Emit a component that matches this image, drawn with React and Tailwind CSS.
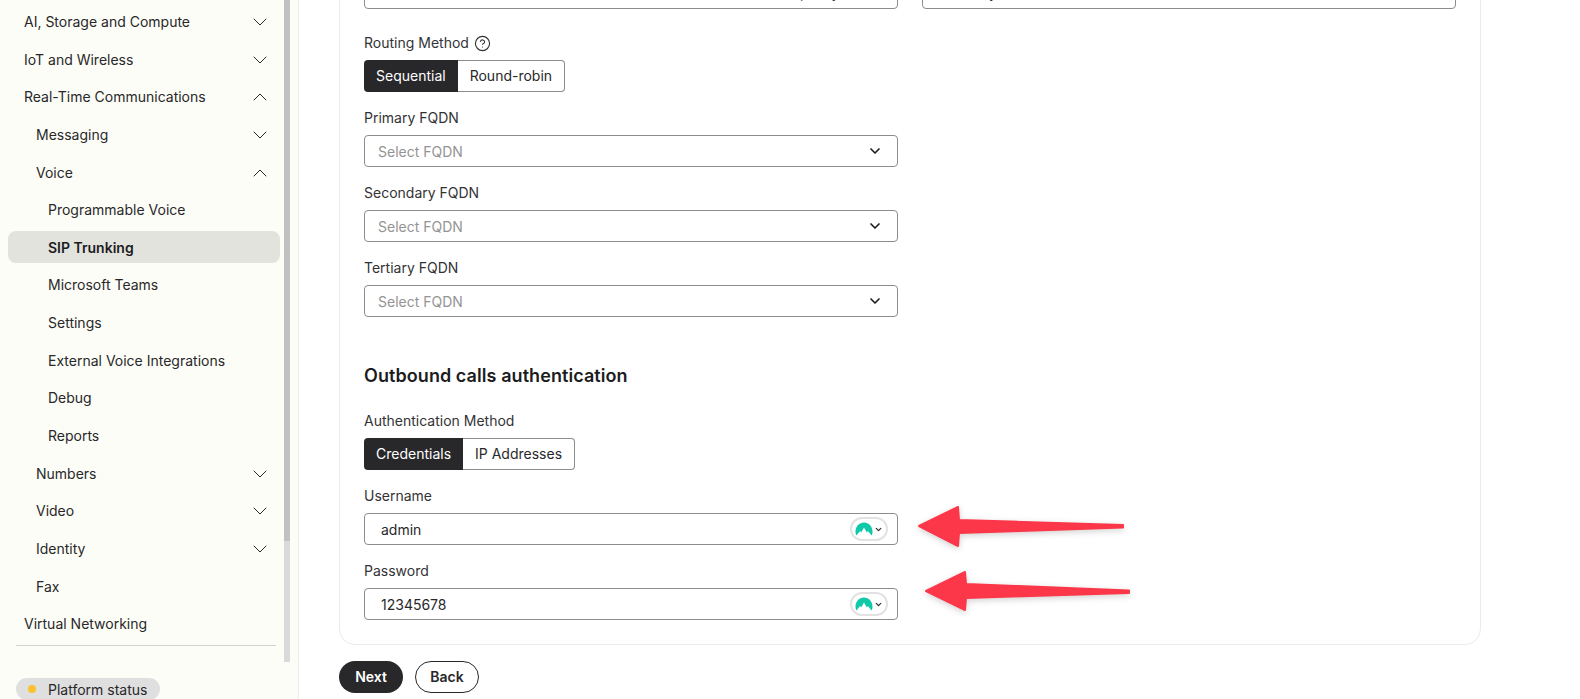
import React from "react";
import { ChevronDown, ChevronUp, CircleHelp } from "lucide-react";

const navItems = [
  { label: "AI, Storage and Compute", level: 0, icon: "down" },
  { label: "IoT and Wireless", level: 0, icon: "down" },
  { label: "Real-Time Communications", level: 0, icon: "up" },
  { label: "Messaging", level: 1, icon: "down" },
  { label: "Voice", level: 1, icon: "up" },
  { label: "Programmable Voice", level: 2 },
  { label: "SIP Trunking", level: 2, active: true },
  { label: "Microsoft Teams", level: 2 },
  { label: "Settings", level: 2 },
  { label: "External Voice Integrations", level: 2 },
  { label: "Debug", level: 2 },
  { label: "Reports", level: 2 },
  { label: "Numbers", level: 1, icon: "down" },
  { label: "Video", level: 1, icon: "down" },
  { label: "Identity", level: 1, icon: "down" },
  { label: "Fax", level: 1 },
  { label: "Virtual Networking", level: 0 },
];

const levelPadding = ["pl-4", "pl-7", "pl-10"];

const NavRow = ({ item }) => (
  <div
    className={`flex h-8 shrink-0 items-center justify-between rounded-lg pr-2 pt-px ${levelPadding[item.level]} ${
      item.active ? "bg-[#e3e3de] font-semibold text-[#1c1c1e]" : ""
    }`}
  >
    <span>{item.label}</span>
    {item.icon === "down" && <ChevronDown size={24} strokeWidth={1} />}
    {item.icon === "up" && <ChevronUp size={24} strokeWidth={1} />}
  </div>
);

const Sidebar = () => (
  <aside className="flex h-[699px] w-[299px] shrink-0 flex-col overflow-hidden border-r border-[#ececec] bg-[#fdfdf7]">
    <div className="flex h-[662px] shrink-0 pl-2">
      <nav className="flex w-[272px] shrink-0 flex-col gap-[5.65px] pt-[5.5px]">
        {navItems.map((item) => (
          <NavRow key={item.label} item={item} />
        ))}
        <div className="ml-2 mr-1 border-t border-[#d2d2cf]" />
      </nav>
      <div className="ml-1 flex w-[6px] flex-col bg-[#dadada]">
        <div className="h-[541px] bg-[#c1c1c1]" />
      </div>
    </div>
    <div className="ml-4 mt-4 flex h-[28px] w-[144px] items-center gap-3 rounded-full bg-[#dfdfdf] pl-3">
      <span className="h-2 w-2 rounded-full bg-[#fdc02f]" />
      <span className="pt-[2px]">Platform status</span>
    </div>
  </aside>
);

const Label = ({ children, className = "" }) => (
  <div className={`flex h-5 items-center leading-5 text-[#333335] ${className}`}>
    {children}
  </div>
);

const Toggle = ({ options }) => (
  <div className="mt-[7px] flex h-8 w-fit">
    <div className="flex items-center rounded-l bg-[#28282a] px-3 text-white">
      {options[0]}
    </div>
    <div className="flex items-center rounded-r border border-l-0 border-[#8c8c8c] px-3">
      {options[1]}
    </div>
  </div>
);

const FqdnSelect = ({ label }) => (
  <>
    <Label className="mt-4">{label}</Label>
    <div className="mt-[7px] flex h-8 w-[534px] items-center justify-between rounded border border-[#8c8c8c] pl-[13px] pr-[14px] text-[#949494]">
      <span className="pt-px">Select FQDN</span>
      <ChevronDown size={16} strokeWidth={2.5} className="text-[#1c1c1e]" />
    </div>
  </>
);

const PasswordBadge = () => (
  <div className="flex h-6 w-[38px] items-center rounded-full border-2 border-[#e2e2e2] bg-white pl-[3px]">
    <svg width="18" height="14" viewBox="0 0 18 14" className="shrink-0">
      <path
        d="M1.400 13.500C.7 12.200.5 10.900.5 9.400.5 4.500 4.300.5 9 .5s8.500 4 8.500 8.900c0 1.500-.2 2.800-.9 4.100L12.800 9l-1 1.400L9 5.500 6.200 10.400l-1-1.400z"
        fill="#10c9a8"
      />
    </svg>
    <ChevronDown size={9} strokeWidth={3.5} className="ml-[1px] shrink-0 text-[#333335]" />
  </div>
);

const CredentialInput = ({ label, value }) => (
  <>
    <Label className="mt-4">{label}</Label>
    <div className="mt-[7px] flex h-8 w-[534px] items-center justify-between rounded border border-[#8c8c8c] pl-4 pr-[9px]">
      <span className="pt-px">{value}</span>
      <PasswordBadge />
    </div>
  </>
);

const Arrows = () => (
  <svg
    width="1580"
    height="699"
    className="pointer-events-none absolute left-0 top-0 drop-shadow-[0_2px_3px_rgba(0,0,0,0.18)]"
  >
    <path
      d="M919 526 L958 507 L959 520 L1123 525 L1123 527.500 L959 533 L958 546 Z"
      fill="#fc3749"
      stroke="#fc3749"
      strokeWidth="2"
      strokeLinejoin="round"
    />
    <path
      d="M926 591 L965 572 L966 584 L1129 590.500 L1129 593 L966 598 L965 610 Z"
      fill="#fc3749"
      stroke="#fc3749"
      strokeWidth="2"
      strokeLinejoin="round"
    />
  </svg>
);

const App = () => {
  return (
    <div className="relative flex h-[699px] w-[1580px] overflow-hidden bg-white font-['Inter',sans-serif] text-sm text-[#28282a]">
      <Sidebar />
      <main className="min-w-0 flex-1 pl-10">
        <div className="-mt-12 w-[1142px] rounded-2xl border border-[#ebebeb] p-6">
          <div className="flex gap-6">
            <div className="flex h-8 w-[534px] items-center rounded border border-[#8c8c8c] pl-[435px]">
              policy
            </div>
            <div className="flex h-8 w-[534px] items-center rounded border border-[#8c8c8c] pl-[13px]">
              Authority
            </div>
          </div>

          <Label className="mt-6 gap-[5px]">
            Routing Method
            <CircleHelp size={17} strokeWidth={1.6} />
          </Label>
          <Toggle options={["Sequential", "Round-robin"]} />
          <FqdnSelect label="Primary FQDN" />
          <FqdnSelect label="Secondary FQDN" />
          <FqdnSelect label="Tertiary FQDN" />

          <h2 className="mt-[45px] text-lg font-semibold leading-7 tracking-[0.07px] text-[#1c1c1e]">
            Outbound calls authentication
          </h2>
          <Label className="mt-[21px]">Authentication Method</Label>
          <Toggle options={["Credentials", "IP Addresses"]} />
          <CredentialInput label="Username" value="admin" />
          <CredentialInput label="Password" value="12345678" />
        </div>

        <div className="mt-4 flex gap-3 font-semibold">
          <button className="h-8 w-16 rounded-full bg-[#28282a] text-white">Next</button>
          <button className="h-8 w-16 rounded-full border border-[#28282a]">Back</button>
        </div>
      </main>
      <Arrows />
    </div>
  );
};

export default App;
